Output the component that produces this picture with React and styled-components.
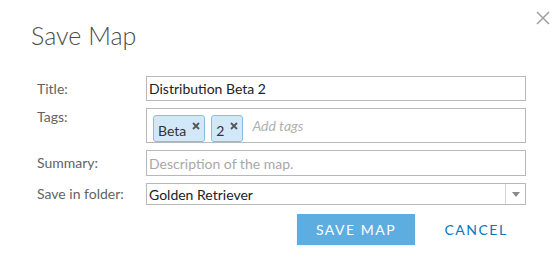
import React from 'react'
import styled, { createGlobalStyle } from 'styled-components'

const font = `Lato, "Open Sans", "Liberation Sans", sans-serif`
const azul = '#0079c1'

const Global = createGlobalStyle`
  body {
    margin: 0;
    background: #fff;
    font-family: ${font};
  }
`

const Dialog = styled.div`
  position: relative;
  width: 560px;
  height: 274px;
  box-sizing: border-box;
  padding: 19px 0 0 31px;
`

const Titulo = styled.h1`
  margin: 0;
  font-size: 25px;
  font-weight: 300;
  line-height: 32px;
  color: #4c4c4c;
`

const Fechar = styled.button`
  position: absolute;
  top: 10px;
  right: 9px;
  width: 16px;
  height: 16px;
  padding: 0;
  border: none;
  background: none;
  cursor: pointer;
`

const Form = styled.form`
  display: grid;
  grid-template-columns: 109px 380px;
  row-gap: 7px;
  margin: 25px 0 0 6px;
`

const Label = styled.label`
  font-size: 14px;
  color: #636363;
  line-height: ${p => p.$h}px;
  height: ${p => p.$h}px;
  align-self: start;
`

const Campo = styled.div`
  box-sizing: border-box;
  height: ${p => p.$h}px;
  border: 1px solid #b8b8b8;
  display: flex;
  align-items: center;
  padding-left: 2px;
  font-size: 14px;
  color: ${p => (p.$placeholder ? '#a8a8a8' : '#222')};
`

const CaixaTags = styled.div`
  box-sizing: border-box;
  height: 35px;
  border: 1px solid #b8b8b8;
  display: flex;
  align-items: center;
  gap: 6px;
  padding: 0 0 0 6px;
`

const Tag = styled.span`
  box-sizing: border-box;
  height: 27px;
  margin-top: 6px;
  display: flex;
  align-items: center;
  gap: 6px;
  padding: 3px 4px 0 4px;
  background: #d2e8f8;
  border: 1px solid #86bfe6;
  border-radius: 3px;
  font-size: 14px;
  color: #333;
`

const TagX = styled.svg`
  width: 8px;
  height: 8px;
  margin-top: -8px;
`

const Placeholder = styled.span`
  font-size: 14px;
  font-style: italic;
  color: #b0b0b0;
  margin-left: 3px;
`

const Select = styled(Campo)`
  justify-content: space-between;
  padding-right: 0;
`

const Seta = styled.span`
  width: 19px;
  height: 100%;
  border-left: 1px solid #d4d4d4;
  display: flex;
  align-items: center;
  justify-content: center;
`

const Botoes = styled.div`
  display: flex;
  gap: 2px;
  margin: 9px 0 0 266px;
`

const Botao = styled.button`
  flex: none;
  width: 118px;
  height: 31px;
  border: none;
  padding: 0;
  font-family: ${font};
  font-size: 14px;
  letter-spacing: 1.5px;
  text-transform: uppercase;
  background: ${p => (p.$primario ? '#5dade0' : 'transparent')};
  color: ${p => (p.$primario ? '#fff' : azul)};
  box-shadow: ${p => (p.$primario ? '0 1px 2px rgba(0,0,0,0.08)' : 'none')};
  cursor: pointer;
`

function XTag() {
  return (
    <TagX viewBox="0 0 8 8">
      <path d="M1 1 L7 7 M7 1 L1 7" stroke="#555" strokeWidth="1.8" />
    </TagX>
  )
}

export default function App() {
  return (
    <>
      <Global />
      <Dialog>
        <Titulo>Save Map</Titulo>
        <Fechar aria-label="Fechar">
          <svg width="16" height="16" viewBox="0 0 16 16">
            <path d="M2 2 L14 14 M14 2 L2 14" stroke="#a3a3a3" strokeWidth="1.6" />
          </svg>
        </Fechar>
        <Form>
          <Label $h={25}>Title:</Label>
          <Campo $h={25}>Distribution Beta 2</Campo>

          <Label $h={18}>Tags:</Label>
          <CaixaTags>
            <Tag>Beta <XTag /></Tag>
            <Tag>2 <XTag /></Tag>
            <Placeholder>Add tags</Placeholder>
          </CaixaTags>

          <Label $h={26}>Summary:</Label>
          <Campo $h={26} $placeholder>Description of the map.</Campo>

          <Label $h={22}>Save in folder:</Label>
          <Select $h={22}>
            Golden Retriever
            <Seta>
              <svg width="8" height="5" viewBox="0 0 8 5">
                <path d="M0 0 L8 0 L4 5 Z" fill="#8a8a8a" />
              </svg>
            </Seta>
          </Select>
        </Form>
        <Botoes>
          <Botao $primario>Save Map</Botao>
          <Botao>Cancel</Botao>
        </Botoes>
      </Dialog>
    </>
  )
}
